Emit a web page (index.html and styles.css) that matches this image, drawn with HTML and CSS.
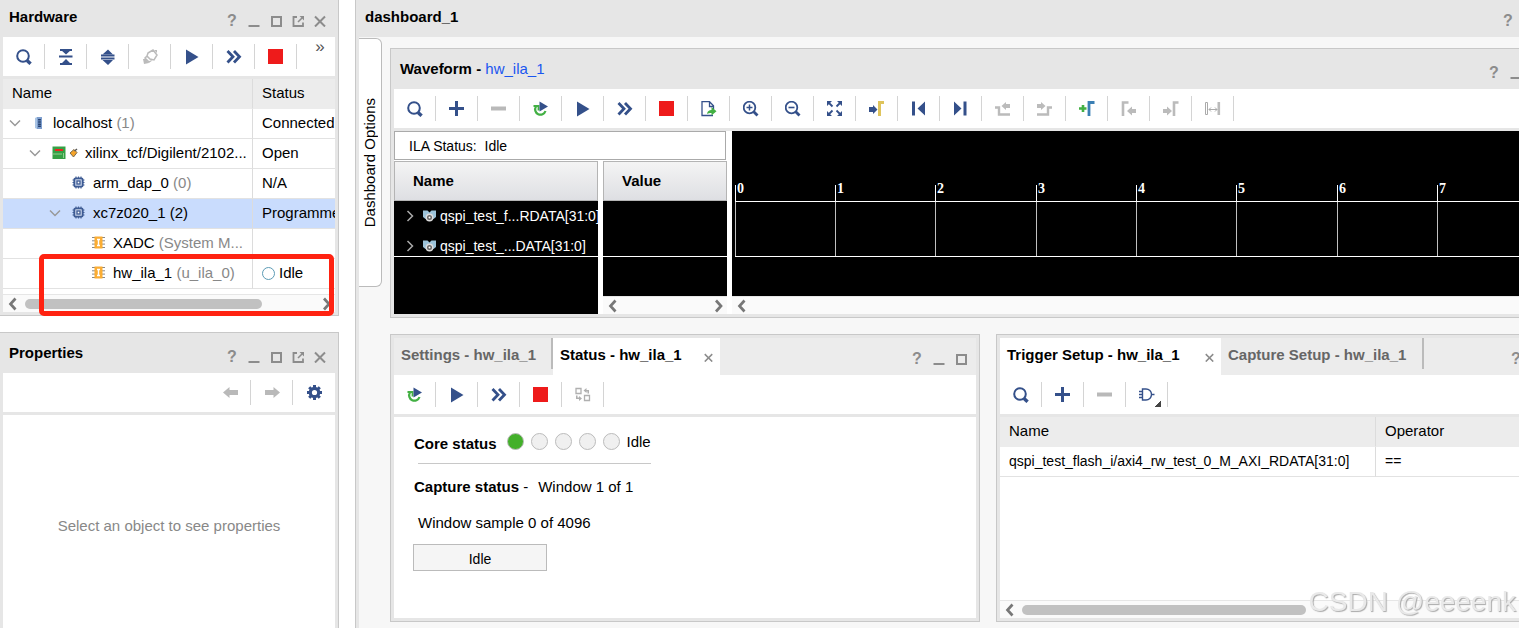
FILE: index.html
```html
<!DOCTYPE html>
<html lang="en">
<head>
  <meta charset="UTF-8">
  <meta name="viewport" content="width=device-width, initial-scale=1.0">
  <title>Hardware Manager</title>
  <link rel="stylesheet" href="styles.css">
</head>
<body>
  <!-- Icon set -->
  <svg class="sprite" aria-hidden="true">
    <symbol id="i-search" viewBox="0 0 16 16"><circle cx="7" cy="7" r="5.800" fill="none" stroke="#34508a" stroke-width="2"/><path d="M11 11.500l3.600 3.300" stroke="#34508a" stroke-width="3.400"/></symbol>
    <symbol id="i-collapse" viewBox="0 0 16 16"><path d="M2 1h12M1 7.500h13.500M2 15h12" stroke="#34508a" stroke-width="1.800"/><path d="M3 1h10L8 5.500zM3 15h10l-5-5z" fill="#34508a"/></symbol>
    <symbol id="i-expand" viewBox="0 0 16 16"><path d="M1 6.500h13.500M1 9.500h13.500" stroke="#34508a" stroke-width="1.800"/><path d="M2.500 5.500h10.500L8 .5zM2.500 11h10.500L8 16z" fill="#34508a"/></symbol>
    <symbol id="i-plug" viewBox="0 0 16 16"><path d="M6 4l5-3 4 5-3 5-4-1-3-3zM5 7l-2 2 4 4 3-2" fill="none" stroke="#bbb" stroke-width="1.500"/><path d="M1 10h3l3 4-5 1zM12 1h3v3z" fill="#bbb"/></symbol>
    <symbol id="i-play" viewBox="0 0 16 16"><path d="M2 .5l12.500 7.500L2 15.500z" fill="#34508a"/></symbol>
    <symbol id="i-fast" viewBox="0 0 16 16"><path d="M1.500 2l5.500 5.700-5.500 5.800M8 2l5.500 5.700L8 13.500" fill="none" stroke="#34508a" stroke-width="2.800"/></symbol>
    <symbol id="i-stop" viewBox="0 0 16 16"><path d="M0 0h15v15H0z" fill="#ee1b1b"/></symbol>
    <symbol id="i-plus" viewBox="0 0 16 16"><path d="M7.500 0v15M0 7.500h15" stroke="#34508a" stroke-width="3"/></symbol>
    <symbol id="i-minus" viewBox="0 0 16 16"><path d="M0 7.500h15" stroke="#b9b9b9" stroke-width="4"/></symbol>
    <symbol id="i-rerun" viewBox="0 0 16 16"><path d="M3 5.500A5.300 5.300 0 1 0 12.500 10" fill="none" stroke="#42b043" stroke-width="2.200"/><path d="M.5 5h5v4.500" fill="none" stroke="#42b043" stroke-width="1.800"/><path d="M6.500 .5l8.500 5-8.500 5z" fill="#34508a"/></symbol>
    <symbol id="i-export" viewBox="0 0 16 16"><path d="M12 14.500H1V.7h7.500l4 4V8M8.500 1v4.500h4" fill="none" stroke="#34508a" stroke-width="1.300"/><path d="M6 13c.5-3 2-4 4.500-4V6l5 4.200-5 4.300V12c-2 0-3 0-4.500 1z" fill="#42b043"/></symbol>
    <symbol id="i-zoomin" viewBox="0 0 16 16"><circle cx="6.500" cy="6.500" r="5.800" fill="none" stroke="#34508a" stroke-width="1.800"/><path d="M6.500 3.500v6M3.500 6.500h6" stroke="#34508a" stroke-width="1.500"/><path d="M10.500 10.500l4 4" stroke="#34508a" stroke-width="2.800"/></symbol>
    <symbol id="i-zoomout" viewBox="0 0 16 16"><circle cx="6.500" cy="6.500" r="5.800" fill="none" stroke="#34508a" stroke-width="1.800"/><path d="M3.500 6.500h6" stroke="#34508a" stroke-width="1.600"/><path d="M10.500 10.500l4 4" stroke="#34508a" stroke-width="2.800"/></symbol>
    <symbol id="i-fit" viewBox="0 0 16 16"><path d="M0 0h5L0 5zM15 0h-5l5 5zM0 15h5l-5-5zM15 15h-5l5-5z" fill="#34508a"/><path d="M1.500 1.500l4 4M13.500 1.500l-4 4M1.500 13.500l4-4M13.500 13.500l-4-4" stroke="#34508a" stroke-width="1.800"/></symbol>
    <symbol id="i-cursor" viewBox="0 0 16 16"><path d="M10.500 15V1.500h4.500" fill="none" stroke="#dfc45c" stroke-width="3"/><path d="M0 6h4V4l4.500 4.500L4 13v-2H0z" fill="#34508a"/></symbol>
    <symbol id="i-first" viewBox="0 0 16 16"><path d="M1 .5h3v14H1zM14 .5v14l-7.500-7z" fill="#34508a"/></symbol>
    <symbol id="i-last" viewBox="0 0 16 16"><path d="M10.500 .5h3v14h-3zM1 .5v14l7.500-7z" fill="#34508a"/></symbol>
    <symbol id="i-prevedge" viewBox="0 0 16 16"><path d="M0 6.500H4V13.500h11" fill="none" stroke="#bbb" stroke-width="2.400"/><path d="M15 3v4h-4v2L6.500 5 11 1v2z" fill="#bbb"/></symbol>
    <symbol id="i-nextedge" viewBox="0 0 16 16"><path d="M15 6.500H11V13.500H0" fill="none" stroke="#bbb" stroke-width="2.400"/><path d="M0 3v4h4v2l4.500-4L4 1v2z" fill="#bbb"/></symbol>
    <symbol id="i-addmark" viewBox="0 0 16 16"><path d="M4 4v7M0 7.500h7.500" stroke="#42b043" stroke-width="2.600"/><path d="M10 15V1.500h5.500" fill="none" stroke="#3a7fb4" stroke-width="2.800"/></symbol>
    <symbol id="i-prevmark" viewBox="0 0 16 16"><path d="M2 15V1.500h5.500" fill="none" stroke="#bbb" stroke-width="2.600"/><path d="M15 8h-4V5.500l-5 4.500 5 4.500V12h4z" fill="#bbb"/></symbol>
    <symbol id="i-nextmark" viewBox="0 0 16 16"><path d="M11 15V1.500h4.500" fill="none" stroke="#bbb" stroke-width="2.600"/><path d="M0 8h4V5.500L9 10l-5 4.500V12H0z" fill="#bbb"/></symbol>
    <symbol id="i-swapmark" viewBox="0 0 16 16"><path d="M.5 1.500h2v12h-2z" fill="none" stroke="#aaa"/><path d="M12.500 1h2.600v13h-2.600z" fill="#bbb"/><path d="M4 8.500h8M6 6.500l-2 2 2 2M10 6.500l2 2-2 2" fill="none" stroke="#aaa"/></symbol>
    <symbol id="i-swap" viewBox="0 0 16 16"><path d="M1 1.500h5v5H1zM9.500 8.500h5v5h-5z" fill="none" stroke="#b0b0b0" stroke-width="1.300"/><path d="M8.500 3.500l3-2.500v2H14v3.500h-1.500V4.500h-1V6zM7 11.500L4 14v-2H1V8.500h1.500V10.500H4V9z" fill="#b0b0b0"/></symbol>
    <symbol id="i-gate" viewBox="0 0 16 16"><path d="M3.500 2h3.500a5.500 5.500 0 0 1 0 11H3.500zM0 4.500h4M0 7.500h3M0 10.500h4M12.500 7.500h3" fill="none" stroke="#34508a" stroke-width="1.400"/></symbol>
    <symbol id="i-back" viewBox="0 0 16 16"><path d="M16 5H7.500V2L1 7.500 7.500 13v-3H16z" fill="#b9b9b9"/></symbol>
    <symbol id="i-forward" viewBox="0 0 16 16"><path d="M1 5h8.500V2L16 7.500 9.500 13v-3H1z" fill="#b9b9b9"/></symbol>
    <symbol id="i-gear" viewBox="0 0 16 16"><circle cx="8.500" cy="7.500" r="4.200" fill="none" stroke="#34508a" stroke-width="3.200"/><path d="M8.500 0v3M8.500 12v3M1 7.500h3M13 7.500h3M3.200 2.200l2 2M11.800 10.800l2 2M3.200 12.800l2-2M11.800 4.200l2-2" stroke="#34508a" stroke-width="3"/></symbol>
    <symbol id="c-min" viewBox="0 0 12 12"><path d="M.5 11h11" stroke="#8c8c8c" stroke-width="2"/></symbol>
    <symbol id="c-max" viewBox="0 0 12 12"><path d="M2 2h9v9H2z" fill="none" stroke="#8c8c8c" stroke-width="2"/></symbol>
    <symbol id="c-float" viewBox="0 0 12 12"><path d="M5 2H1.500v9H11V7.500" fill="none" stroke="#8c8c8c" stroke-width="1.800"/><path d="M6 7l4-4" stroke="#8c8c8c" stroke-width="1.600"/><path d="M7.500 1H12v4.500z" fill="#8c8c8c"/></symbol>
    <symbol id="c-close" viewBox="0 0 12 12"><path d="M1 1.500l10 10M11 1.500l-10 10" stroke="#8c8c8c" stroke-width="2"/></symbol>
    <symbol id="t-down" viewBox="0 0 12 12"><path d="M1 3.500l5 5 5-5" fill="none" stroke="#999" stroke-width="1.500"/></symbol>
    <symbol id="t-right" viewBox="0 0 12 12"><path d="M3.500 1l5 5-5 5" fill="none" stroke="#aaa" stroke-width="1.500"/></symbol>
    <symbol id="t-host" viewBox="0 0 14 14"><path d="M3 2l2-1v12l-2-1z" fill="#a9c4e4"/><path d="M5 1h5v12H5z" fill="#7f9fce"/><path d="M7.500 3v8" stroke="#24406f" stroke-width="2.800" stroke-dasharray="1.500 .7"/></symbol>
    <symbol id="t-board" viewBox="0 0 14 14"><path d="M.5 .5h13v12.500H.5z" fill="#36a045"/><path d="M3 3h8v2H3z" fill="#e22"/><path d="M1 8h9M11.500 7v5" stroke="#8fd08f" fill="none"/></symbol>
    <symbol id="t-cable" viewBox="0 0 9 14"><path d="M1 7L5 3.500l3 3L4.500 11z" fill="#f5a42a" stroke="#7b6a4b"/><path d="M5.500 5L8 3" stroke="#555" stroke-width="1.500"/></symbol>
    <symbol id="t-chip" viewBox="0 0 14 14"><path d="M4 .5v12M6.500 .5v12M9 .5v12M.5 4h12M.5 6.500h12M.5 9h12" stroke="#4a6797" stroke-width="1.200"/><rect x="2.300" y="2.300" width="8.400" height="8.400" rx="1.500" fill="#c9d4e8" stroke="#3d5b94" stroke-width="1.800"/><rect x="5" y="5" width="3" height="3" fill="#fff" stroke="#3d5b94" stroke-width="1.300"/></symbol>
    <symbol id="t-core" viewBox="0 0 14 14"><path d="M0 1.500h13M0 4.800h13M0 8.100h13M0 11.500h13" stroke="#888"/><path d="M2.500 .5h8v12h-8z" fill="#fbad33"/><path d="M5 3.500h3M5 9.500h3M6.500 3.500v6" stroke="#fff" stroke-width="1.400"/></symbol>
    <symbol id="t-bus" viewBox="0 0 14 14"><path d="M0 1.500h4.500l2 2 2-2H13V8l-2.500 2h-8L0 8z" fill="#9cc3d9"/><circle cx="6.500" cy="8.500" r="3.200" fill="#666" stroke="#ddd" stroke-width="1.400"/><circle cx="6.500" cy="8.500" r="1" fill="#fff"/></symbol>
    <symbol id="s-left" viewBox="0 0 18 16"><path d="M12.500 2.500L7.500 8l5 5.500" fill="none" stroke="#777" stroke-width="2.700"/></symbol>
    <symbol id="s-right" viewBox="0 0 18 16"><path d="M7 2.500L12 8l-5 5.500" fill="none" stroke="#777" stroke-width="2.700"/></symbol>
  </svg>

  <!-- Left side: hardware tree and properties -->
  <aside class="sidebar">
    <section class="panel hardware">
      <header class="panel-head">
        <h2>Hardware</h2>
        <div class="controls">
          <button aria-label="Help">?</button>
          <button aria-label="Minimize"><svg><use href="#c-min"/></svg></button>
          <button aria-label="Maximize"><svg><use href="#c-max"/></svg></button>
          <button aria-label="Float"><svg><use href="#c-float"/></svg></button>
          <button aria-label="Close"><svg><use href="#c-close"/></svg></button>
        </div>
      </header>
      <div class="toolbar">
        <button aria-label="Search"><svg><use href="#i-search"/></svg></button>
        <button aria-label="Collapse all"><svg><use href="#i-collapse"/></svg></button>
        <button aria-label="Expand all"><svg><use href="#i-expand"/></svg></button>
        <button aria-label="Auto connect"><svg><use href="#i-plug"/></svg></button>
        <button aria-label="Run trigger"><svg><use href="#i-play"/></svg></button>
        <button aria-label="Run immediate"><svg><use href="#i-fast"/></svg></button>
        <button aria-label="Stop"><svg><use href="#i-stop"/></svg></button>
        <button class="more" aria-label="More">»</button>
      </div>
      <table class="grid tree">
        <thead>
          <tr><th class="col-name">Name</th><th>Status</th></tr>
        </thead>
        <tbody>
          <tr>
            <td><div class="node"><svg class="twisty"><use href="#t-down"/></svg><svg class="icon"><use href="#t-host"/></svg>localhost&nbsp;<span class="dim">(1)</span></div></td>
            <td>Connected</td>
          </tr>
          <tr>
            <td><div class="node level-1"><svg class="twisty"><use href="#t-down"/></svg><svg class="icon"><use href="#t-board"/></svg><svg class="cable"><use href="#t-cable"/></svg>xilinx_tcf/Digilent/2102...</div></td>
            <td>Open</td>
          </tr>
          <tr>
            <td><div class="node level-2"><svg class="twisty"></svg><svg class="icon"><use href="#t-chip"/></svg>arm_dap_0&nbsp;<span class="dim">(0)</span></div></td>
            <td>N/A</td>
          </tr>
          <tr class="selected">
            <td><div class="node level-2"><svg class="twisty"><use href="#t-down"/></svg><svg class="icon"><use href="#t-chip"/></svg>xc7z020_1 (2)</div></td>
            <td>Programmed</td>
          </tr>
          <tr>
            <td><div class="node level-3"><svg class="twisty"></svg><svg class="icon"><use href="#t-core"/></svg>XADC&nbsp;<span class="dim">(System M...</span></div></td>
            <td></td>
          </tr>
          <tr>
            <td><div class="node level-3"><svg class="twisty"></svg><svg class="icon"><use href="#t-core"/></svg>hw_ila_1&nbsp;<span class="dim">(u_ila_0)</span></div></td>
            <td><span class="ring"></span>Idle</td>
          </tr>
        </tbody>
      </table>
      <div class="scroll">
        <svg><use href="#s-left"/></svg>
        <div class="track"><div class="thumb tree-thumb"></div></div>
        <svg><use href="#s-right"/></svg>
      </div>
      <div class="callout"></div>
    </section>

    <section class="panel properties">
      <header class="panel-head">
        <h2>Properties</h2>
        <div class="controls">
          <button aria-label="Help">?</button>
          <button aria-label="Minimize"><svg><use href="#c-min"/></svg></button>
          <button aria-label="Maximize"><svg><use href="#c-max"/></svg></button>
          <button aria-label="Float"><svg><use href="#c-float"/></svg></button>
          <button aria-label="Close"><svg><use href="#c-close"/></svg></button>
        </div>
      </header>
      <div class="toolbar right">
        <button aria-label="Previous"><svg><use href="#i-back"/></svg></button>
        <button aria-label="Next"><svg><use href="#i-forward"/></svg></button>
        <button class="last" aria-label="Settings"><svg><use href="#i-gear"/></svg></button>
      </div>
      <div class="empty">Select an object to see properties</div>
    </section>
  </aside>

  <!-- Dashboard -->
  <main class="dashboard">
    <header class="panel-head dash-head">
      <h2>dashboard_1</h2>
      <div class="controls"><button aria-label="Help">?</button></div>
    </header>
    <div class="dash-body">
      <button class="side-tab"><span>Dashboard Options</span></button>
      <div class="board">
        <section class="panel">
          <header class="panel-head">
            <h2>Waveform - <a href="#">hw_ila_1</a></h2>
            <div class="controls">
              <button aria-label="Help">?</button>
              <button aria-label="Minimize"><svg><use href="#c-min"/></svg></button>
              <button aria-label="Maximize"><svg><use href="#c-max"/></svg></button>
              <button aria-label="Close"><svg><use href="#c-close"/></svg></button>
            </div>
          </header>
          <div class="toolbar">
            <button aria-label="Search"><svg><use href="#i-search"/></svg></button>
            <button aria-label="Add"><svg><use href="#i-plus"/></svg></button>
            <button aria-label="Remove"><svg><use href="#i-minus"/></svg></button>
            <button aria-label="Auto re-trigger"><svg><use href="#i-rerun"/></svg></button>
            <button aria-label="Run trigger"><svg><use href="#i-play"/></svg></button>
            <button aria-label="Run immediate"><svg><use href="#i-fast"/></svg></button>
            <button aria-label="Stop"><svg><use href="#i-stop"/></svg></button>
            <button aria-label="Export"><svg><use href="#i-export"/></svg></button>
            <button aria-label="Zoom in"><svg><use href="#i-zoomin"/></svg></button>
            <button aria-label="Zoom out"><svg><use href="#i-zoomout"/></svg></button>
            <button aria-label="Zoom fit"><svg><use href="#i-fit"/></svg></button>
            <button aria-label="Go to cursor"><svg><use href="#i-cursor"/></svg></button>
            <button aria-label="Go to start"><svg><use href="#i-first"/></svg></button>
            <button aria-label="Go to end"><svg><use href="#i-last"/></svg></button>
            <button aria-label="Previous transition"><svg><use href="#i-prevedge"/></svg></button>
            <button aria-label="Next transition"><svg><use href="#i-nextedge"/></svg></button>
            <button aria-label="Add marker"><svg><use href="#i-addmark"/></svg></button>
            <button aria-label="Previous marker"><svg><use href="#i-prevmark"/></svg></button>
            <button aria-label="Next marker"><svg><use href="#i-nextmark"/></svg></button>
            <button aria-label="Swap cursors"><svg><use href="#i-swapmark"/></svg></button>
          </div>
          <div class="wave-body">
            <div class="wave-side">
              <div class="ila-status">ILA Status:&nbsp; Idle</div>
              <div class="wave-cols">
                <div class="names">
                  <div class="col-head">Name</div>
                  <div class="signals">
                    <div class="signal"><svg class="arrow"><use href="#t-right"/></svg><svg class="icon"><use href="#t-bus"/></svg>qspi_test_f...RDATA[31:0]</div>
                    <div class="signal"><svg class="arrow"><use href="#t-right"/></svg><svg class="icon"><use href="#t-bus"/></svg>qspi_test_...DATA[31:0]</div>
                  </div>
                </div>
                <div class="values">
                  <div class="col-head">Value</div>
                  <div class="signals"></div>
                  <div class="scroll">
                    <svg><use href="#s-left"/></svg>
                    <div class="track"></div>
                    <svg><use href="#s-right"/></svg>
                  </div>
                </div>
              </div>
            </div>
            <div class="wave">
              <div class="ruler">
                <span>0</span><span>1</span><span>2</span><span>3</span><span>4</span><span>5</span><span>6</span><span>7</span>
              </div>
              <div class="lanes">
                <i></i><i></i><i></i><i></i><i></i><i></i><i></i><i></i>
              </div>
              <div class="scroll"><svg><use href="#s-left"/></svg></div>
            </div>
          </div>
        </section>

        <div class="lower">
          <section class="panel">
            <header class="panel-head tabs">
              <button class="tab settings">Settings - hw_ila_1</button>
              <button class="tab status active">Status - hw_ila_1 <svg><use href="#c-close"/></svg></button>
              <div class="controls">
                <button aria-label="Help">?</button>
                <button aria-label="Minimize"><svg><use href="#c-min"/></svg></button>
                <button aria-label="Maximize"><svg><use href="#c-max"/></svg></button>
              </div>
            </header>
            <div class="toolbar">
              <button aria-label="Auto re-trigger"><svg><use href="#i-rerun"/></svg></button>
              <button aria-label="Run trigger"><svg><use href="#i-play"/></svg></button>
              <button aria-label="Run immediate"><svg><use href="#i-fast"/></svg></button>
              <button aria-label="Stop"><svg><use href="#i-stop"/></svg></button>
              <button aria-label="Swap"><svg><use href="#i-swap"/></svg></button>
            </div>
            <div class="status-body">
              <div class="core">
                <b>Core status</b>
                <div class="lamps"><i class="on"></i><i></i><i></i><i></i><i></i></div>
                <span>Idle</span>
              </div>
              <div class="capture"><b>Capture status</b> -<span>Window 1 of 1</span></div>
              <p class="sample">Window sample 0 of 4096</p>
              <div class="progress">Idle</div>
            </div>
          </section>

          <section class="panel">
            <header class="panel-head tabs">
              <button class="tab trigger active">Trigger Setup - hw_ila_1 <svg><use href="#c-close"/></svg></button>
              <button class="tab capture-tab">Capture Setup - hw_ila_1</button>
              <div class="controls">
                <button aria-label="Help">?</button>
                <button aria-label="Minimize"><svg><use href="#c-min"/></svg></button>
                <button aria-label="Maximize"><svg><use href="#c-max"/></svg></button>
              </div>
            </header>
            <div class="toolbar">
              <button aria-label="Search"><svg><use href="#i-search"/></svg></button>
              <button aria-label="Add"><svg><use href="#i-plus"/></svg></button>
              <button aria-label="Remove"><svg><use href="#i-minus"/></svg></button>
              <button class="has-menu" aria-label="Trigger condition"><svg><use href="#i-gate"/></svg></button>
            </div>
            <div class="trigger-body">
              <table class="grid probes">
                <thead>
                  <tr><th class="col-name">Name</th><th>Operator</th></tr>
                </thead>
                <tbody>
                  <tr><td>qspi_test_flash_i/axi4_rw_test_0_M_AXI_RDATA[31:0]</td><td>==</td></tr>
                </tbody>
              </table>
              <div class="scroll">
                <svg><use href="#s-left"/></svg>
                <div class="track"><div class="thumb probe-thumb"></div></div>
                <svg><use href="#s-right"/></svg>
              </div>
            </div>
          </section>
        </div>
      </div>
    </div>
  </main>

  <div class="watermark">CSDN @eeeenk</div>
</body>
</html>
```
FILE: styles.css
```css
* {
  margin: 0;
  padding: 0;
  box-sizing: border-box;
}

body {
  font-family: "Liberation Sans", Arial, sans-serif;
  font-size: 15px;
  line-height: 18px;
  color: #000;
  background: #fff;
  display: flex;
  gap: 16px;
  height: 100vh;
  overflow: hidden;
}

button {
  font: inherit;
  color: inherit;
  background: none;
  border: none;
}

svg {
  display: block;
  flex: none;
}

.sprite {
  position: absolute;
  width: 0;
  height: 0;
}

/* Panels */
.panel {
  background: #e6e6e6;
  border: 1px solid #c8c8c8;
  padding: 3px;
  display: flex;
  flex-direction: column;
}

.panel-head {
  height: 37px;
  flex: none;
  display: flex;
  justify-content: space-between;
  background: #e6e6e6;
}

.panel-head h2 {
  font-size: 15px;
  line-height: 34px;
  padding-left: 6px;
}

.panel-head h2 a {
  font-weight: normal;
  color: #1a56f0;
  text-decoration: none;
}

.controls {
  display: flex;
  margin-left: auto;
  padding: 5px 4px 0 0;
}

.controls button {
  width: 22px;
  height: 32px;
  display: flex;
  justify-content: center;
  align-items: center;
  font-size: 16px;
  font-weight: bold;
  color: #8c8c8c;
}

.controls svg {
  width: 12px;
  height: 12px;
}

.toolbar {
  height: 39px;
  flex: none;
  background: #fff;
  display: flex;
  align-items: center;
  margin-bottom: 3px;
}

.toolbar.right {
  justify-content: flex-end;
}

.toolbar button {
  width: 42px;
  height: 25px;
  flex: none;
  display: flex;
  align-items: center;
  justify-content: center;
  border-right: 1px solid #d4d4d4;
}

.toolbar svg {
  width: 16px;
  height: 16px;
}

.toolbar .more {
  width: 20px;
  height: 37px;
  align-items: flex-start;
  border: none;
  margin-left: auto;
  margin-right: 5px;
  font-size: 17px;
  color: #555;
}

.toolbar .last {
  border: none;
}

.toolbar .has-menu {
  background: linear-gradient(135deg, transparent 50%, #444 50%) no-repeat right 6px bottom / 6px 6px;
}

/* Left side */
.sidebar {
  width: 339px;
  flex: none;
  display: flex;
  flex-direction: column;
  gap: 16px;
}

.sidebar .panel {
  border-left: none;
}

.hardware {
  position: relative;
  border-top: none;
  padding-top: 0;
}

.properties {
  flex: 1;
  border-bottom: none;
  padding-bottom: 0;
}

.empty {
  flex: 1;
  padding-top: 8px;
  background: #fff;
  color: #888;
  display: flex;
  align-items: center;
  justify-content: center;
}

/* Red box around the ILA core */
.callout {
  position: absolute;
  left: 39px;
  right: 4px;
  bottom: -1px;
  height: 62px;
  border: 5px solid #ff2211;
  border-radius: 5px;
}

/* Tables */
.grid {
  width: 100%;
  table-layout: fixed;
  border-collapse: separate;
  border-spacing: 0;
  background: #fff;
}

.grid th,
.grid td {
  height: 30px;
  padding: 0 0 1px 9px;
  text-align: left;
  font-weight: normal;
  white-space: nowrap;
  overflow: hidden;
  border-bottom: 1px solid #e2e2e2;
}

.grid th {
  background: #ececec;
  border-bottom-color: #ececec;
}

.grid th:first-child,
.grid td:first-child {
  border-right: 1px solid #dcdcdc;
}

.tree .col-name {
  width: 250px;
}

.tree tbody td:first-child {
  padding-left: 2px;
}

.selected td {
  background: #c9dcfd;
}

.node {
  display: flex;
  align-items: center;
}

.level-1 {
  padding-left: 20px;
}

.level-2 {
  padding-left: 40px;
}

.level-3 {
  padding-left: 60px;
}

.twisty {
  width: 20px;
  height: 12px;
}

.icon {
  width: 14px;
  height: 14px;
}

.node .icon {
  margin: 0 7px;
}

.cable {
  width: 9px;
  height: 14px;
  margin: 0 7px 0 -4px;
}

.dim {
  color: #888;
}

.ring {
  display: inline-block;
  width: 13px;
  height: 13px;
  margin-right: 4px;
  border: 1px solid #5b9bb5;
  border-radius: 50%;
  vertical-align: -2px;
}

.scroll {
  height: 18px;
  flex: none;
  display: flex;
  align-items: center;
  background: #fafafa;
  border-top: 1px solid #e6e6e6;
}

.scroll svg {
  width: 18px;
  height: 16px;
}

.track {
  flex: 1;
  padding-left: 4px;
}

.thumb {
  height: 10px;
  border-radius: 5px;
  background: #c1c1c1;
}

.tree-thumb {
  width: 81%;
}

.probe-thumb {
  width: 53%;
}

.hardware .grid {
  border-bottom: 5px solid #fff;
}

/* Dashboard */
.dashboard {
  flex: 1;
  min-width: 0;
  display: flex;
  flex-direction: column;
  border-left: 1px solid #c8c8c8;
  background: #f7f7f7;
}

.dash-head {
  padding-left: 3px;
}

.dash-head .controls {
  padding-right: 0;
}

.dash-body {
  flex: 1;
  min-height: 0;
  display: flex;
  align-items: flex-start;
  border-left: 3px solid #e6e6e6;
  overflow: hidden;
}

.side-tab {
  width: 23px;
  height: 249px;
  margin-top: 1px;
  flex: none;
  background: #fff;
  border: 1px solid #bbb;
  border-left: none;
  border-radius: 0 6px 6px 0;
  display: flex;
  align-items: center;
  justify-content: center;
}

.side-tab span {
  writing-mode: vertical-rl;
  transform: rotate(180deg);
}

/* The board is wider than the window and runs off its right side */
.board {
  flex: 1;
  min-width: 0;
  align-self: stretch;
  display: flex;
  flex-direction: column;
  gap: 16px;
  padding: 11px 0 6px;
  margin-left: 8px;
  margin-right: -60px;
}

/* Waveform */
.wave-body {
  height: 183px;
  display: flex;
  gap: 5px;
  background: #fff;
}

.wave-side {
  width: 333px;
  flex: none;
  display: flex;
  flex-direction: column;
  gap: 1px;
}

.ila-status {
  height: 29px;
  margin-right: 1px;
  padding-left: 14px;
  border: 1px solid #aaa;
  font-size: 14px;
  line-height: 28px;
}

.wave-cols {
  flex: 1;
  display: flex;
  gap: 5px;
}

.names,
.values {
  display: flex;
  flex-direction: column;
  background: #000;
}

.names {
  width: 204px;
}

.values {
  flex: 1;
}

.col-head {
  height: 40px;
  padding-left: 18px;
  border: 1px solid #b4b4b4;
  background: linear-gradient(#f4f4f4, #dedfe3);
  font-weight: bold;
  line-height: 38px;
}

.signals {
  height: 56px;
  border-bottom: 1px solid #fff;
  overflow: hidden;
}

.signal {
  height: 30px;
  display: flex;
  align-items: center;
  gap: 3px;
  padding-left: 10px;
  color: #fff;
  font-size: 14px;
  white-space: nowrap;
}

.arrow {
  width: 12px;
  height: 12px;
  margin-right: 4px;
}

.wave .scroll,
.values .scroll {
  margin-top: auto;
}

.wave {
  flex: 1;
  min-width: 0;
  background: #000;
  display: flex;
  flex-direction: column;
  padding-top: 54px;
}

.ruler,
.lanes {
  display: grid;
  grid-template-columns: repeat(3, 100px 100px 101px);
  margin-left: 3px;
}

.ruler {
  height: 16px;
  color: #fff;
  font-family: "Liberation Serif", serif;
  font-weight: bold;
  font-size: 14px;
  line-height: 8px;
}

.ruler span {
  padding-left: 1px;
  border-left: 1px solid #fff;
}

.lanes {
  height: 56px;
  border-top: 1px solid #fff;
  border-bottom: 1px solid #fff;
}

.lanes i {
  border-left: 1px solid #c0c0c0;
}

/* Lower panels */
.lower {
  flex: 1;
  min-height: 0;
  display: grid;
  grid-template-columns: 590fr 583fr;
  gap: 16px;
}

.lower .panel {
  min-width: 0;
}

.tabs {
  background: #ececec;
}

.tab {
  height: 31px;
  padding: 3px 0 0 7px;
  display: flex;
  align-items: center;
  flex: none;
  font-weight: bold;
  color: #666;
  border-right: 2px solid #bbb;
  white-space: nowrap;
}

.tab.active {
  height: 37px;
  padding-bottom: 6px;
  background: #fff;
  color: #000;
  border: none;
}

.tab svg {
  width: 9px;
  height: 9px;
  margin: 4px 7px 0 auto;
}

.settings {
  width: 159px;
}

.status {
  width: 167px;
}

.trigger {
  width: 221px;
}

.capture-tab {
  width: 203px;
}

.status-body {
  flex: 1;
  background: #fff;
  padding: 16px 19px 0;
}

.core {
  position: relative;
  width: 238px;
  height: 31px;
  padding-left: 1px;
  display: flex;
  align-items: flex-start;
  white-space: nowrap;
}

.core::after {
  content: "";
  position: absolute;
  left: 5px;
  right: 0;
  bottom: 0;
  border-bottom: 1px solid #c8c8c8;
}

.core b {
  padding-top: 2px;
}

.lamps {
  display: flex;
  gap: 7px;
  margin: 0 7px 0 10px;
}

.lamps i {
  width: 17px;
  height: 17px;
  border: 1px solid #bbb;
  border-radius: 50%;
  background: #f0f0f0;
}

.lamps .on {
  background: #43b02a;
}

.capture {
  padding: 14px 0 0 1px;
}

.capture span {
  margin-left: 10px;
}

.sample {
  padding: 18px 0 12px 5px;
}

.progress {
  width: 134px;
  height: 27px;
  border: 1px solid #bbb;
  background: #f5f5f5;
  text-align: center;
  line-height: 28px;
  font-size: 14px;
}

.trigger-body {
  flex: 1;
  background: #fff;
  display: flex;
  flex-direction: column;
  justify-content: space-between;
}

.probes .col-name {
  width: 376px;
}

.probes td {
  font-size: 14px;
}

.watermark {
  position: fixed;
  right: 3px;
  bottom: 10px;
  font-size: 28px;
  line-height: 32px;
  color: #e9e9e9;
  text-shadow: 1px 1px 1px #aaa;
}
```
